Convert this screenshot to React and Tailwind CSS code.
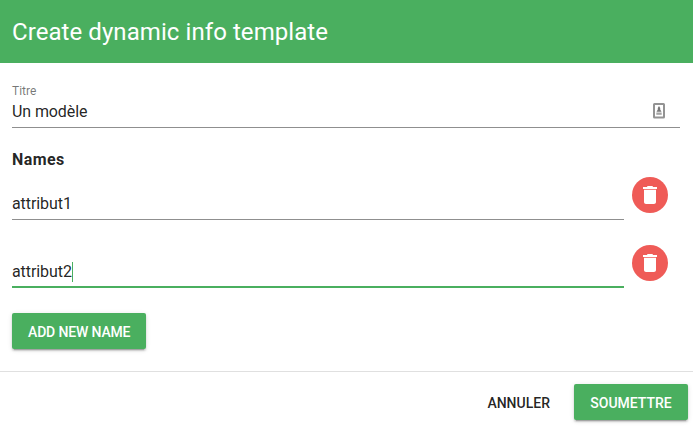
import React, { useState } from "react";

const raised =
  "shadow-[0_3px_1px_-2px_rgba(0,0,0,0.2),0_2px_2px_0_rgba(0,0,0,0.14),0_1px_5px_0_rgba(0,0,0,0.12)]";

function Button({ children, primary, className }) {
  return (
    <button
      type="button"
      className={`h-9 rounded-xs px-4 pt-0.5 text-sm font-medium whitespace-nowrap uppercase ${
        primary ? `bg-[#4aaf5f] text-white ${raised}` : "text-black/87"
      } ${className || ""}`}
    >
      {children}
    </button>
  );
}

function TrashIcon() {
  return (
    <svg viewBox="0 0 24 24" className="size-6 fill-white">
      <path d="M6 19c0 1.1.9 2 2 2h8c1.1 0 2-.9 2-2V6.700H6V19zM19 4h-4v-.5l-1-.5h-4l-1 .5V4H5v2h14V4z" />
    </svg>
  );
}

function ContactIcon() {
  return (
    <svg viewBox="0 0 12 16" className="mr-[15px] h-4 w-3">
      <rect x="1" y="1" width="10" height="13.500" rx="0.5" fill="#fff" stroke="#939393" strokeWidth="2" />
      <path d="M6 3 7.200 5v1.500l1.300 2.200h-5l1.300-2.200V5z" fill="#777" />
      <rect x="3.300" y="9.500" width="5.400" height="2.300" fill="#a5a5a5" />
    </svg>
  );
}

function NameRow({ value, focused }) {
  return (
    <div className="flex h-[68px] items-start">
      <div
        className={`flex h-[45px] w-[612px] items-end ${
          focused ? "border-b-2 border-[#4aaf5f] pb-1" : "border-b border-[#8f8f8f] pb-[5px]"
        }`}
      >
        <span className="text-base leading-5 tracking-[-0.08px]">{value}</span>
        {focused && <span className="h-5 w-px bg-[#4aaf5f]" />}
      </div>
      <button
        type="button"
        aria-label="Delete"
        className="mt-0.5 ml-2 flex size-9 items-center justify-center rounded-full bg-[#ef5b57]"
      >
        <TrashIcon />
      </button>
    </div>
  );
}

export default function App() {
  const [names] = useState(["attribut1", "attribut2"]);
  return (
    <div className="flex h-[429px] w-[693px] flex-col overflow-hidden bg-white font-[Roboto,sans-serif] text-black/87">
      <header className="flex h-[63px] items-center bg-[#4aaf5f] px-3 text-2xl tracking-[0.07px] text-white">
        <h1>Create dynamic info template</h1>
      </header>
      <main className="flex h-[308px] flex-col items-start px-3 pt-5">
        <div className="h-[45px] w-[668px] border-b border-[#8f8f8f]">
          <div className="text-xs leading-4 text-black/54">Titre</div>
          <div className="flex h-6 items-center justify-between text-base">
            <span className="pt-0.5 tracking-[-0.1px]">Un modèle</span>
            <ContactIcon />
          </div>
        </div>
        <h2 className="mt-5 h-[27px] text-base leading-6 font-bold tracking-[0.4px]">Names</h2>
        {names.map((name, i) => (
          <NameRow key={name} value={name} focused={i === names.length - 1} />
        ))}
        <Button primary className="mt-[2px] w-[134px] shrink-0 tracking-[-0.15px]">
          Add new name
        </Button>
      </main>
      <footer className="flex h-[58px] items-start justify-end gap-2 border-t border-[#e0e0e0] pt-3 pr-[5px]">
        <Button>Annuler</Button>
        <Button primary className="w-[114px]">
          Soumettre
        </Button>
      </footer>
    </div>
  );
}
